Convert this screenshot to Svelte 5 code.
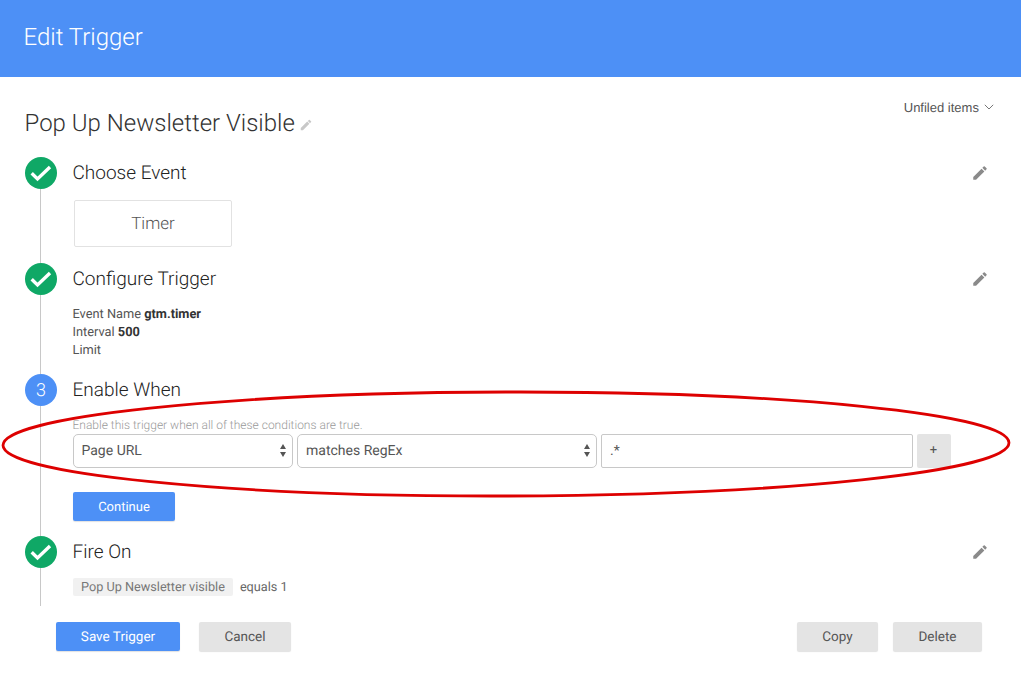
<script>
  const pencil = "M3 17.25V21h3.75L17.81 9.94l-3.75-3.75L3 17.25zM20.71 7.04a1 1 0 0 0 0-1.41l-2.34-2.34a1 1 0 0 0-1.41 0l-1.83 1.83 3.75 3.75 1.83-1.83z";
  const check = "M6.7 16.3l5.8 5.6L25 10";
</script>

{#snippet done()}
  <span class="badge green">
    <svg viewBox="0 0 32 32" width="32" height="32"><path d={check} fill="none" stroke="#fff" stroke-width="3.4" /></svg>
  </span>
{/snippet}

{#snippet edit()}
  <svg class="edit" viewBox="0 0 24 24" width="18" height="18"><path d={pencil} fill="#8a8a8a" /></svg>
{/snippet}

<div class="page">
  <header class="bar">Edit Trigger</header>

  <main class="body">
    <div class="top">
      <h1>Pop Up Newsletter Visible
        <svg viewBox="0 0 24 24" width="14" height="14"><path d={pencil} fill="#c8c8c8" /></svg>
      </h1>
      <div class="folder">
        Unfiled items
        <svg viewBox="0 0 10 6" width="10" height="6"><path d="M.8.8 5 5 9.2.8" fill="none" stroke="#777" stroke-width="1" /></svg>
      </div>
    </div>

    <section class="step s1">
      <div class="rail">{@render done()}<i></i></div>
      <div class="content">
        <div class="head"><h2>Choose Event</h2>{@render edit()}</div>
        <div class="card">Timer</div>
      </div>
    </section>

    <section class="step s2">
      <div class="rail">{@render done()}<i></i></div>
      <div class="content">
        <div class="head"><h2>Configure Trigger</h2>{@render edit()}</div>
        <div class="info">
          <div>Event Name <b>gtm.timer</b></div>
          <div>Interval <b>500</b></div>
          <div>Limit</div>
        </div>
      </div>
    </section>

    <section class="step s3">
      <div class="rail"><span class="badge blue">3</span><i></i></div>
      <div class="content">
        <div class="head"><h2>Enable When</h2></div>
        <p class="hint">Enable this trigger when all of these conditions are true.</p>
        <div class="cond">
          <div class="select w1">Page URL<span class="updown"></span></div>
          <div class="select w2">matches RegEx<span class="updown"></span></div>
          <div class="input">.*</div>
          <div class="plus">+</div>
        </div>
        <button class="btn primary cont">Continue</button>
      </div>
    </section>

    <section class="step s4">
      <div class="rail">{@render done()}<i></i></div>
      <div class="content">
        <div class="head"><h2>Fire On</h2>{@render edit()}</div>
        <div class="fire"><span class="chip">Pop Up Newsletter visible</span><span class="eq">equals 1</span></div>
      </div>
    </section>

    <footer class="actions">
      <button class="btn primary save">Save Trigger</button>
      <button class="btn cancel">Cancel</button>
      <button class="btn copy">Copy</button>
      <button class="btn del">Delete</button>
    </footer>
  </main>

  <svg class="ring" viewBox="0 0 1021 675" width="1021" height="675">
    <ellipse cx="506" cy="444" rx="503" ry="52" transform="rotate(-0.15 506 444)" fill="none" stroke="#dd0000" stroke-width="2.8" />
  </svg>
</div>

<style>
  :global(body) { margin: 0; background: #fff; }
  .page { position: relative; width: 1021px; height: 675px; overflow: hidden; font-family: Roboto, "Liberation Sans", sans-serif; color: #444; text-rendering: geometricPrecision; }
  .bar { height: 77px; box-sizing: border-box; background: #4d90f6; color: #fff; font-size: 24px; font-weight: 300; padding: 22px 0 0 23.5px; line-height: 30px; }
  .body { padding: 0 0 0 25px; }
  .top { display: flex; justify-content: space-between; height: 80px; }
  h1 { margin: 30px 0 0 -0.5px; font-size: 24px; font-weight: 300; line-height: 32px; color: #333; }
  h1 svg { margin-left: -2px; vertical-align: -1px; }
  .folder { margin: 23px 27px 0 0; font-family: "Liberation Sans", sans-serif; font-size: 13px; line-height: 15px; color: #555; }
  .folder svg { margin-left: 1.5px; vertical-align: 2px; }
  .step { display: flex; }
  .rail { width: 48px; flex: none; display: flex; flex-direction: column; align-items: flex-start; }
  .rail i { display: block; width: 1px; flex: 1; background: #c8c8c8; margin-left: 15px; }
  .badge { width: 32px; height: 32px; flex: none; border-radius: 50%; display: flex; align-items: center; justify-content: center; color: #fff; font-size: 18px; font-weight: 300; }
  .badge svg { display: block; }
  .green { background: #0fa866; }
  .blue { background: #4d90f6; }
  .content { flex: 1; min-width: 0; }
  .head { display: flex; justify-content: space-between; align-items: center; height: 32px; padding-right: 32px; }
  h2 { margin: 0 0 2px -0.5px; font-size: 19px; font-weight: 300; color: #222; }
  .edit { display: block; }
  .s1 { height: 106px; }
  .s2 { height: 111px; }
  .s3 { height: 162px; }
  .s4 { height: 70px; }
  .card { margin: 11px 0 0 1px; width: 158px; height: 47px; box-sizing: border-box; border: 1px solid #e2e2e2; border-radius: 2px; display: flex; align-items: center; justify-content: center; font-size: 17px; font-weight: 300; color: #555; }
  .info { margin: 11px 0 0 -0.5px; font-size: 12.8px; line-height: 18px; color: #555; }
  .info b { font-weight: 700; color: #333; }
  .hint { margin: 12px 0 0 -0.5px; font-size: 12px; font-weight: 300; line-height: 14px; color: #999; }
  .cond { display: flex; gap: 4px; margin-top: 2px; }
  .select, .input { height: 34px; box-sizing: border-box; border: 1px solid #c8c8c8; display: flex; align-items: center; font-size: 14px; color: #555; position: relative; padding-left: 8px; }
  .select { border-radius: 5px; }
  .input { border-radius: 2px; width: 312px; }
  .w1 { width: 220px; padding-left: 7.5px; }
  .w2 { width: 300px; }
  .updown { position: absolute; right: 6px; top: 9px; width: 0; height: 0; border-left: 3px solid transparent; border-right: 3px solid transparent; border-bottom: 5px solid #555; }
  .updown::after { content: ""; position: absolute; left: -3px; top: 8px; width: 0; height: 0; border-left: 3px solid transparent; border-right: 3px solid transparent; border-top: 5px solid #555; }
  .plus { width: 34px; height: 34px; padding-right: 1px; padding-bottom: 1px; box-sizing: border-box; background: #e4e4e4; border-radius: 2px; display: flex; align-items: center; justify-content: center; font-size: 13px; color: #555; }
  .btn { border: 0; border-radius: 2px; height: 29px; padding: 0; font-family: Roboto, sans-serif; font-size: 13.5px; box-shadow: 0 1px 1px rgba(0,0,0,.12); background: #e4e4e4; color: #555; display: block; text-rendering: geometricPrecision; }
  .primary { background: #4d90f6; color: #fff; }
  .cont { width: 102px; margin-top: 24px; padding-top: 1px; font-size: 13px; }
  .fire { display: flex; align-items: center; margin-top: 10px; font-size: 12.7px; }
  .chip { background: #f1f1f1; color: #777; height: 18px; line-height: 19px; padding: 0 8px; border-radius: 2px; }
  .eq { margin-left: 7px; margin-top: 1px; color: #666; }
  .actions { display: flex; padding-top: 16px; }
  .save { width: 124px; margin-left: 31px; }
  .cancel { width: 92px; margin-left: 19px; }
  .copy { width: 81px; margin-left: 506px; }
  .del { width: 89px; margin-left: 15px; }
  .ring { position: absolute; left: 0; top: 0; pointer-events: none; }
</style>
